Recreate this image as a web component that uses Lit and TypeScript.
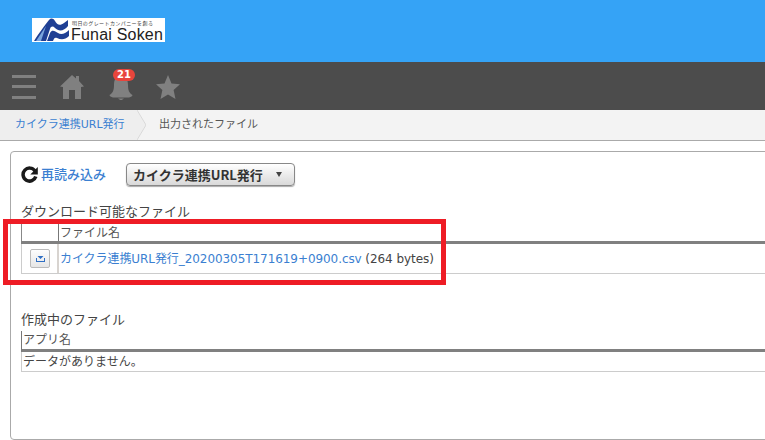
import { LitElement, html, css } from "lit";
import { customElement } from "lit/decorators.js";

@customElement("app-root")
export class AppRoot extends LitElement {
  static styles = css`
    :host { display: block; width: 765px; height: 440px; overflow: hidden; position: relative; background: #fff;
      font-family: "DejaVu Sans", "Noto Sans CJK JP", sans-serif; font-size: 12px; color: #333; }
    a { color: #3b7fd1; text-decoration: none; }
    .top { height: 62px; background: #35a3f6; display: flex; align-items: flex-start; padding: 18px 0 0 32px; box-sizing: border-box; }
    .logo { width: 133px; height: 24px; background: #fff; display: flex; gap: 1px; box-sizing: border-box; padding-left: 1px; }
    .logo svg { width: 37px; height: 24px; flex: none; }
    .logo-text { display: flex; flex-direction: column; line-height: 1; color: #222; }
    .tag { font-family: "Noto Sans CJK JP", sans-serif; font-size: 5px; line-height: 7px; margin: 1px 0 1px 1px; white-space: nowrap; color: #444; letter-spacing: .42px; }
    .brand { font-family: "Liberation Sans", sans-serif; font-size: 16px; line-height: 15px; white-space: nowrap; letter-spacing: .2px; }
    .nav { height: 48px; background: #4c4c4c; display: flex; align-items: flex-start; padding: 12px 0 0 12px; box-sizing: border-box; }
    .nav svg { display: block; width: 24px; height: 26px; fill: #808080; flex: none; }
    .burger { margin-right: 24px; }
    .home { margin-right: 25px; }
    .bell-wrap { position: relative; margin-right: 23px; }
    .badge { position: absolute; left: 4px; top: -5px; width: 22px; height: 12px; border-radius: 6px; background: #e8453c; color: #fff;
      font: bold 10px/12px "DejaVu Sans", sans-serif; text-align: center; }
    .crumbs { height: 31px; background: #fff; border-bottom: 1px solid #aaa; box-sizing: border-box; display: flex; align-items: stretch; line-height: 30px; font-size: 11px; }
    .crumb1 { background: #eeeeee; padding: 0 0 0 15px; width: 137px; box-sizing: border-box; white-space: nowrap; }
    .crumb2 { background: #f3f3f3; flex: 1; padding-left: 13px; color: #555; }
    .chev { width: 9px; height: 30px; flex: none; display: block; }
    .panel { margin: 10px -40px 0 10px; height: 289px; box-sizing: border-box; border: 1px solid #aaa; border-radius: 4px; padding: 10px 0 0 10px; }
    .tools { display: flex; align-items: center; height: 24px; }
    .reload { width: 17px; height: 17px; margin-right: 3px; flex: none; margin-top: 1px; }
    .reload-link { font-weight: 500; font-size: 13px; color: #3b7fd1; width: 85px; white-space: nowrap; padding-bottom: 1px; }
    .select { width: 169px; height: 23px; box-sizing: border-box; border: 1px solid #888; border-radius: 4px;
      background: linear-gradient(#ffffff, #d9d9d9); font-family: "Noto Sans CJK JP", sans-serif; font-weight: 700; font-size: 13px; color: #333; display: flex; align-items: center; padding-left: 6px; gap: 13px; box-shadow: 0 1px 1px #aaa; white-space: nowrap; }
    .caret { width: 0; height: 0; border: 3px solid transparent; border-top: 5px solid #444; border-bottom: 0; }
    h2 { font-size: 13px; font-weight: 400; margin: 0; line-height: 18px; color: #444; }
    .dl { margin: 17px 0 3px; }
    .make { margin: 37px 0 2px; }
    .thead { display: flex; border-bottom: 3px solid #808080; color: #555; line-height: 18px; height: 17px; }
    .thead .c1 { width: 37px; flex: none; border-left: 1px solid #888; box-sizing: border-box; }
    .thead .c2 { flex: 1; border-left: 1px solid #777; padding-left: 1px; }
    .trow { display: flex; height: 30px; box-sizing: border-box; border-bottom: 1px solid #ccc; line-height: 30px; }
    .trow .c1 { width: 38px; flex: none; box-sizing: border-box; border-left: 1px solid #ccc; border-right: 2px solid #d8d4d0; padding: 5px 0 0 8px; }
    .trow .c2 { flex: 1; padding-left: 1px; white-space: nowrap; color: #444; letter-spacing: -.07px; }
    .dlbtn { width: 20px; height: 19px; box-sizing: border-box; border: 1px solid #bbb; border-radius: 2px; background: linear-gradient(#fdfdfd, #e6e6e6); display: flex; align-items: center; justify-content: center; }
    .dlbtn svg { width: 9px; height: 6px; fill: #2f6fc4; }
    .thead2 { height: 18px; border-bottom: 3px solid #808080; border-left: 1px solid #777; padding-left: 1px; line-height: 19px; color: #555; }
    .trow2 { height: 20px; box-sizing: border-box; border-bottom: 1px solid #ccc; border-left: 1px solid #ccc; line-height: 20px; padding-left: 1px; color: #444; }
    .mark { position: absolute; left: 3px; top: 219px; width: 443px; height: 66px; box-sizing: border-box; border: 5px solid #ee1c25; pointer-events: none; }
  `;

  render() {
    return html`
      <div class="top">
        <div class="logo">
          <svg viewBox="0 0 37 24">
            <path d="M1 23 C6 15 12 7 16 2 C18 0 20 0 22 3 C24 7 27 8 31 5 L35 2 L35 8 C31 13 26 14 22 10 C20 8 18 8 17 11 L13 23 Z" fill="#1f3f94"/>
            <path d="M14 23 L17 15 C19 11 22 13 25 15 C28 17 32 16 36 12 L36 18 C32 22 28 22 24 20 C22 19 21 20 20 23 Z" fill="#1f3f94"/>
            <path d="M3 23 L13 8 L8 23 Z" fill="#7aa5dd"/>
          </svg>
          <div class="logo-text">
            <div class="tag">明日のグレートカンパニーを創る</div>
            <div class="brand">Funai Soken</div>
          </div>
        </div>
      </div>

      <div class="nav">
        <svg class="burger" viewBox="0 0 24 26"><path d="M0 1h24v3H0zM0 11h24v3H0zM0 22h24v3H0z"/></svg>
        <svg class="home" viewBox="0 0 24 26"><path d="M12 1 L16 4.500 V2 H19 V7 L24 12.500 L21 13 V25 H15 V16 H9 V25 H3 V13 L0 12.500 Z"/></svg>
        <div class="bell-wrap">
          <svg viewBox="0 0 24 26"><path d="M12 1 C7 1 5 6 5 11 C5 16 4 19 0.500 21 C0.500 22 2 23 4 23.500 H20 C22 23 23.500 22 23.500 21 C20 19 19 16 19 11 C19 6 17 1 12 1 Z M9 24.500 H15 L12 26.500 Z"/></svg>
          <span class="badge">21</span>
        </div>
        <svg viewBox="0 0 24 26"><path d="M12 1 L15.500 9.500 L24 10.300 L17.600 16 L19.500 25 L12 20.400 L4.500 25 L6.400 16 L0 10.300 L8.500 9.500 Z"/></svg>
      </div>

      <div class="crumbs">
        <a class="crumb1" href="#">カイクラ連携URL発行</a>
        <svg class="chev" viewBox="0 0 9 30">
          <path d="M0 0 H9 V30 H0 Z" fill="#f3f3f3"/>
          <path d="M0 0 L9 15 L0 30 Z" fill="#eeeeee"/>
          <path d="M0 0 L9 15 L0 30" fill="none" stroke="#d9d9d9"/>
        </svg>
        <div class="crumb2">出力されたファイル</div>
      </div>

      <div class="panel">
        <div class="tools">
          <svg class="reload" viewBox="0 0 17 17">
            <path d="M14 5 A6.500 6.500 0 1 0 14.800 10.500" fill="none" stroke="#1a1a1a" stroke-width="3.500"/>
            <path d="M16.800 1 V8.500 H9.300 Z" fill="#1a1a1a"/>
          </svg>
          <a class="reload-link" href="#">再読み込み</a>
          <div class="select">カイクラ連携URL発行<span class="caret"></span></div>
        </div>

        <h2 class="dl">ダウンロード可能なファイル</h2>
        <div class="thead"><div class="c1"></div><div class="c2">ファイル名</div></div>
        <div class="trow">
          <div class="c1"><div class="dlbtn"><svg viewBox="0 0 9 6"><path d="M1.500 0 H7.500 L4.500 3 Z M0 2 H1 V5 H8 V2 H9 V6 H0 Z"/></svg></div></div>
          <div class="c2"><a href="#">カイクラ連携URL発行_20200305T171619+0900.csv</a> (264 bytes)</div>
        </div>

        <h2 class="make">作成中のファイル</h2>
        <div class="thead2">アプリ名</div>
        <div class="trow2">データがありません。</div>
      </div>

      <div class="mark"></div>
    `;
  }
}
